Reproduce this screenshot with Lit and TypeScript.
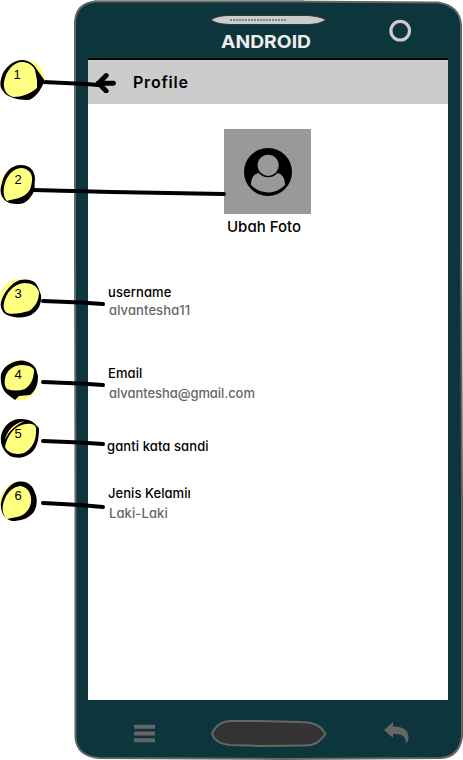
import { LitElement, html, svg, css } from "lit";
import { customElement } from "lit/decorators.js";

interface Callout {
  label: string;
  x: number;
  y: number;
  halo: string;
  ring: string;
  fill: string;
  line: string;
}

const callouts: Callout[] = [
  {
    label: "1", x: 17, y: 79,
    halo: "M1 78C4 67 12 60 21 60C36 59 44 67 45 80C41 91 34 98 24 99C12 99 2 91 1 78Z",
    ring: "M1 79C3 68 13 60 23 60C31 61 35 66 38 71L45 81C42 86 40 91 37 94C33 98 31 100 27 100C18 100 6 97 3 91C0 88 0 83 1 79Z",
    fill: "M4 82C6 70 14 62 22 62C29 62 33 66 35 70L37 80L37 88C30 94 21 97 14 97C7 96 3 90 4 82Z",
    line: "M43 82L86 84L98 85",
  },
  {
    label: "2", x: 18, y: 184,
    halo: "M0 184C2 173 9 166 21 165C32 166 35 173 34 184L30 200L6 202C1 198 0 191 0 184Z",
    ring: "M2 183C4 173 11 165 21 165C30 165 35 171 35 179C34 185 36 190 32 195C28 201 24 204 19 204C12 204 6 203 3 198C0 194 0 188 2 183Z",
    fill: "M4 187C6 175 14 168 22 168C29 169 33 174 32 181C31 189 29 192 25 195C19 199 13 199 7 201C4 198 3 193 4 187Z",
    line: "M33 190L112 192L224 194",
  },
  {
    label: "3", x: 18, y: 298,
    halo: "M0 297C1 286 8 280 18 279L35 282L38 306L12 316C3 313 0 305 0 297Z",
    ring: "M1 302C4 292 11 283 20 280C29 278 36 281 38 287L41 295C42 304 38 311 31 315C24 319 10 318 4 313C1 309 0 306 1 302Z",
    fill: "M4 303C6 293 13 284 24 283C32 283 37 286 39 292C39 301 35 307 29 311C21 313 13 315 7 313C4 311 3 307 4 303Z",
    line: "M43 301L80 302.5L103 304",
  },
  {
    label: "4", x: 18, y: 379,
    halo: "M1 376C4 365 12 360 22 360C33 361 38 369 38 380C38 391 32 399 22 400C10 401 1 389 1 376Z",
    ring: "M1 374C4 366 12 361 21 360.500C29 361 34 365 36 369L38 376C38 386 35 391 30 395L19 396L15 400L7 394C2 390 0 382 1 374Z",
    fill: "M5 379C6 371 13 365 22 365C29 365 34 368 34 370C34 378 31 385 25 389C19 391 13 391 7 389C5 387 4 383 5 379Z",
    line: "M43 382L80 383.5L103 385",
  },
  {
    label: "5", x: 18, y: 438,
    halo: "M1 435C4 424 12 419 22 419L36 425L34 450L17 457C5 455 0 446 1 435Z",
    ring: "M1 436C3 426 11 419 20 419C28 419 33 421 36 425L39 428C39 440 37 448 31 453C25 458 17 459 10 456C3 451 0 444 1 436Z",
    fill: "M5 447C7 436 14 427 23 424.500C31 423 35 424 36 428C37 440 32 449 24 453C17 455 8 454 5 447Z M5 440C7 430 15 423 24 421C15 426 9 431 6 438Z",
    line: "M43 441L80 442.5L103 444",
  },
  {
    label: "6", x: 18, y: 500,
    halo: "M0 500C2 489 9 482 19 481L33 487L33 511L12 520C3 517 0 510 0 500Z",
    ring: "M1 503C3 493 9 484 17 482C26 480 33 485 35 493C38 499 37 508 33 513C28 519 20 521 12 521C4 519 0 511 1 503Z",
    fill: "M3 505C5 494 12 487 20 486C28 487 32 494 31 502C30 510 24 516 17 517C13 518 10 518 7 519C3 515 2 511 3 505Z",
    line: "M43 503L80 505L103 507",
  },
];

@customElement("app-root")
export class AppRoot extends LitElement {
  static styles = css`
    :host {
      display: block;
      position: relative;
      width: 463px;
      height: 760px;
      overflow: hidden;
      background: #fff;
      font-family: Inter, "Open Sans", sans-serif;
      font-feature-settings: "cv11";
      color: #000;
    }
    .phone {
      position: relative;
      box-sizing: border-box;
      width: 389px;
      height: 760px;
      margin-left: 74px;
      padding: 0 15px 0 14px;
      display: grid;
      grid-template-rows: 58px 642px 60px;
    }
    .shell {
      position: absolute;
      left: 0;
      top: 0;
    }
    .top, .nav { position: relative; }
    .top svg, .nav svg { display: block; }
    .brand {
      font-size: 17.5px;
      font-weight: 700;
    }
    .screen {
      position: relative;
      background: #fff;
      border-top: 2px solid #000;
      display: flex;
      flex-direction: column;
    }
    .bar {
      height: 44px;
      flex: none;
      background: #ccc;
      display: flex;
      align-items: center;
      gap: 17px;
      padding-left: 6px;
    }
    .title {
      font-size: 16px;
      font-weight: 600;
      line-height: 20px;
      letter-spacing: 0.8px;
    }
    .photo {
      margin: 25px 0 0 136px;
      width: 87px;
      display: flex;
      flex-direction: column;
    }
    .frame {
      height: 85px;
      background: #999;
      display: flex;
      align-items: center;
      justify-content: center;
    }
    .change {
      margin: 3px 0 0 3px;
      font-size: 15px;
      font-weight: 500;
      line-height: 20px;
      white-space: nowrap;
    }
    .field {
      margin-left: 20px;
      font-size: 13px;
      font-weight: 500;
      white-space: nowrap;
      line-height: 18px;
      letter-spacing: 0.1px;
    }
    .value { color: #666; margin-left: 1px; }
    .user { margin-top: 46px; height: 36px; }
    .email { margin-top: 45px; height: 38px; }
    .email .value, .gender .value { margin-top: 2px; }
    .email .value { letter-spacing: -0.06px; }
    .password { margin: 35px 0 0 19px; height: 18px; }
    .gender { margin-top: 29px; }
    .gender .name { width: 82px; overflow: hidden; letter-spacing: 0.05px; }
    .overlay {
      position: absolute;
      left: 0;
      top: 0;
    }
    .number {
      font-family: "Liberation Sans", sans-serif;
      font-size: 13px;
    }
  `;

  render() {
    return html`
      <main class="phone">
        <svg class="shell" width="389" height="760" viewBox="0 0 389 760">
          <path d="M1 250V22Q2 3 22 1.500H210L364 2.500Q386 6 387 25V250L388 500V737Q385 757 367 758L210 759L25 758Q3 756 1.500 738V500Z" fill="#0d353c" stroke="#666" stroke-width="2"/>
          <path d="M20 .5H230" stroke="#999" stroke-width="1"/>
        </svg>
        <header class="top">
          <svg width="360" height="58" viewBox="88 0 360 58">
            <path d="M211 20C215 17 221 15.500 230 15.500H307C317 16 323 18 326 20C320 23 316 24.500 306 24.500H230C220 24 216 23 211 20Z" fill="#ccc" stroke="#333"/>
            <path d="M230 20H287" stroke="#333" stroke-width="1.2" stroke-dasharray="2 1"/>
            <text class="brand" x="221" y="47.500" fill="#eee" textLength="90" lengthAdjust="spacingAndGlyphs">ANDROID</text>
            <circle cx="400.200" cy="30.700" r="9.300" fill="none" stroke="#ccc" stroke-width="3.200"/>
          </svg>
        </header>
        <section class="screen">
          <div class="bar">
            <svg width="22" height="22" viewBox="0 0 22 22">
              <path d="M19.500 12.300H4M12.200 4.500L4.500 12.300L12.200 20" fill="none" stroke="#000" stroke-width="4.900" stroke-linecap="round" stroke-linejoin="miter"/>
            </svg>
            <div class="title">Profile</div>
          </div>
          <div class="photo">
            <div class="frame">
              <svg width="48" height="48" viewBox="0 0 48 48">
                <circle cx="24" cy="24" r="24"/>
                <path d="M15 25C9 26 7 31 7 37C12 42 18 44.500 24 44.500S36 42 41 37C41 31 39 26 33 25C28 30 20 30 15 25Z" fill="#999"/>
                <circle cx="24.200" cy="17.300" r="12"/>
                <circle cx="24.200" cy="17.300" r="10.600" fill="#999"/>
              </svg>
            </div>
            <div class="change">Ubah Foto</div>
          </div>
          <div class="field user"><div>username</div><div class="value">alvantesha11</div></div>
          <div class="field email"><div>Email</div><div class="value">alvantesha@gmail.com</div></div>
          <div class="field password">ganti kata sandi</div>
          <div class="field gender"><div class="name">Jenis Kelamin</div><div class="value">Laki-Laki</div></div>
        </section>
        <nav class="nav">
          <svg width="360" height="60" viewBox="88 700 360 60">
            <path d="M134 726.800H155M134 733.400H155M134 740.200H155" stroke="#666" stroke-width="4"/>
            <path d="M212 734C215 726 221 721.500 230 721H260L300 722C315 722 321 726 325.500 734C320 741 316 745.500 305 745.500L260 746L230 745C220 744 214 740 212 734Z" fill="#333" stroke="#666" stroke-width="2"/>
            <path d="M384 730L393 722V726.500C404 726 409 731 408.500 739C408 741 407 743 406 743.500C406 736 402 733.500 393 734V738Z" fill="#666"/>
          </svg>
        </nav>
      </main>
      <svg class="overlay" width="463" height="760" viewBox="0 0 463 760">
        ${callouts.map((c) => svg`
          <path d=${c.line} fill="none" stroke="#000" stroke-width="4" stroke-linecap="round"/>
          <path d=${c.halo} fill="#ffff80"/>
          <path d=${c.ring} fill="#000"/>
          <path d=${c.fill} fill="#ffff80"/>
          <text class="number" x=${c.x} y=${c.y} text-anchor="middle">${c.label}</text>
        `)}
      </svg>
    `;
  }
}
